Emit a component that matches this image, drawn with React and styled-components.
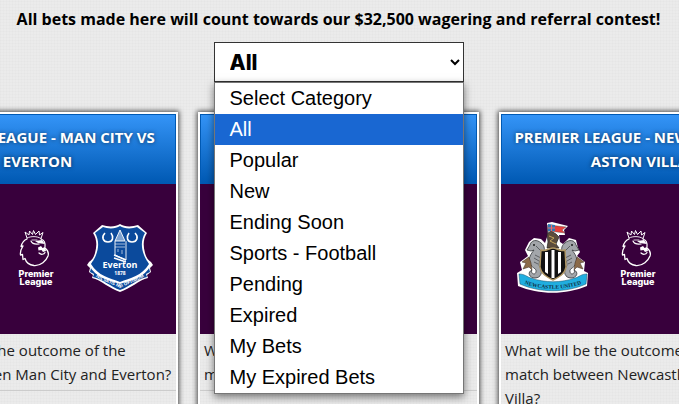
import React, { useState } from "react";
import styled, { createGlobalStyle, css } from "styled-components";

const categories = [
  "Select Category",
  "All",
  "Popular",
  "New",
  "Ending Soon",
  "Sports - Football",
  "Pending",
  "Expired",
  "My Bets",
  "My Expired Bets",
];

const LionLogo = () => (
  <LionIcon viewBox="0 0 48 60" aria-label="Premier League">
    <g fill="none" stroke="#ffffff" strokeLinecap="round" strokeLinejoin="round">
      <path
        strokeWidth="1"
        d="M14 10 L12 4 L16 7 L16.5 3 L19.5 6.5 L20.5 2.5 L22.5 6.5 L26 3 L26.5 7 L30 4.5 L28 10.5"
      />
      <path strokeWidth="0.9" d="M14 10 C18 8 24 8 28 10.5" />
      <path
        strokeWidth="1.3"
        d="M14 11 C11 12 9 15 8 18.5 L10 18 C8 21 7 24 7.5 27 L9.5 26.5 L10 31.5 L12 30.5 C13 34 16 37 21 37.5 C28 38 33 33 35 28 C36 25 34.5 22 32 20"
      />
      <path strokeWidth="1.2" d="M18 13 C19 15.5 22 16.5 26 16 M28 11 C31 12 32.5 15 32 19" />
      <path strokeWidth="0.8" d="M19 12 L24 12" />
      <path strokeWidth="1.2" d="M26 25 C28 27 31 26.5 32 24.5" />
    </g>
    <path fill="#ffffff" d="M22 13 L29 12 L32 16 L28 15.5 L25 15 Z" />
    <path fill="#ffffff" d="M25 19.5 L28 18 L29.5 20 L32 19 L33 23 L30 24 L28.5 22 L25.5 22.5 Z" />
    <text x="23" y="49">
      Premier
    </text>
    <text x="23" y="57">
      League
    </text>
  </LionIcon>
);

const EvertonCrest = () => (
  <Crest viewBox="3 0 72 72" aria-label="Everton">
    <path
      fill="#ffffff"
      d="M36 2 C32 5 24 5 18 3 L9 11 C13 17 13 24 11 31 C10 35 8 38 5 40 L3 43 L6 46 L5 50 L9 53 L8 56 C17 58 26 67 36 70 C46 67 55 58 64 56 L63 53 L67 50 L66 46 L69 43 L67 40 C64 38 62 35 61 31 C59 24 59 17 63 11 L54 3 C48 5 40 5 36 2 Z"
    />
    <path
      fill="#0b4a9c"
      d="M36 4 C32 7 24 7 19 5 L11 11 C15 18 15 25 12 33 C10 38 8 40 7 42 C14 54 26 56 36 60 C46 56 58 54 65 42 C64 40 62 38 60 33 C57 25 57 18 61 11 L53 5 C48 7 40 7 36 4 Z"
    />
    <path
      fill="#0b4a9c"
      d="M5 43 C12 56 24 58 36 62 C48 58 60 56 67 43 L65 46 L66 50 L62 52 L63 55 C53 57 45 65 36 68 C27 65 19 57 9 55 L10 52 L6 50 L7 46 Z"
    />
    <g fill="none" stroke="#ffffff" strokeWidth="1.6">
      <path d="M21 11 C17 15 19 20 24 20 C29 20 30 15 27 11" />
      <path d="M45 11 C42 15 43 20 48 20 C53 20 55 15 51 11" />
    </g>
    <g fill="none" stroke="#ffffff" strokeWidth="0.9">
      <path fill="#7fa3d1" d="M36 8 L31 19 L41 19 Z" />
      <path d="M31 19 V33 L42 38 V19" />
      <path d="M31 22 H41 M31 25 H41 M34 27 V30 M38 28 V32" strokeOpacity="0.7" />
      <path d="M30 33 L42 38 M30 36 L42 40" strokeWidth="1.4" />
    </g>
    <text x="36" y="46" fontSize="9">
      Everton
    </text>
    <text x="36" y="53" fontSize="5">
      1878
    </text>
    <path id="evertonMotto" fill="none" d="M6 49 C14 59 27 61 36 66 C45 61 58 59 66 49" />
    <text fontSize="4.4">
      <textPath href="#evertonMotto" startOffset="50%">
        NIL SATIS NISI OPTIMUM
      </textPath>
    </text>
  </Crest>
);

const Seahorse = () => (
  <g>
    <path
      fill="#a3a6aa"
      stroke="#33363a"
      strokeWidth="0.8"
      d="M24 21 C20 17 14 18 13 23 L10 28 L14 29 L17 28 C14 32 11 36 13 41 C14 46 20 46 19 50 C18 54 13 51 15 48 C10 50 12 56 18 56 C24 56 26 50 23 45 C20 41 25 37 27 31 C28 26 27 23 24 21 Z"
    />
    <path fill="none" stroke="#4a4d51" strokeWidth="0.8" d="M18 33 L24 36 M17 36 L22 39 M17 40 L21 42 M19 24 L24 29" />
    <path fill="#8b6a49" stroke="#3a2b20" strokeWidth="0.5" d="M12 35 L5 40 L9 41 L6 47 L12 45 L15 48 L14 41 Z" />
    <circle cx="17" cy="23" r="1" fill="#1c1c1c" />
  </g>
);

const NewcastleCrest = () => (
  <Crest viewBox="0 0 72 72" aria-label="Newcastle United">
    <path
      fill="#ffffff"
      d="M30 1 L35 0 L51 4 L47 8 L48 13 L42 13 L43 20 L46 22 L52 16 L59 18 L61 26 L63 30 L60 34 L68 40 L67 49 L71 51 L70 64 C49 73 22 73 1 64 L0 51 L5 48 L3 40 L11 34 L8 28 L12 20 L17 16 L24 17 L28 21 L31 12 Z"
    />
    <Seahorse />
    <g transform="translate(72 0) scale(-1 1)">
      <Seahorse />
    </g>
    <path fill="#5b4c3c" stroke="#222222" strokeWidth="0.7" d="M31 20 L30 12 L34 9 L39 12 L42 15 L39 22 L42 26 L30 26 Z" />
    <path fill="none" stroke="#c4a55b" strokeWidth="1" d="M32 14 L37 16 L33 19 L39 22" />
    <path stroke="#444444" strokeWidth="1" d="M31 3 V12" />
    <path fill="#e4403d" stroke="#444444" strokeWidth="0.4" d="M32 3 L49 5 L45 8 L48 11 L32 9 Z" />
    <path fill="#2f78b5" d="M31 2 L38 3 L38 9 L31 9 Z" />
    <path stroke="#ef6a66" strokeWidth="1.1" d="M31 6 L38 6 M34.5 3 V9" />
    <path
      fill="#111111"
      stroke="#b09763"
      strokeWidth="1.4"
      d="M24 28 C29 30 32 26 36 26 C40 26 43 30 48 28 L49 45 C48 52 42 55 36 58 C30 55 24 52 23 45 Z"
    />
    <path fill="#ffffff" d="M28 30 H31 V52 L28 50 Z M34.5 28 H37.5 V56 H34.5 Z M41 30 H44 V50 L41 52 Z" />
    <path
      fill="#20aee0"
      stroke="#134d66"
      strokeWidth="0.5"
      d="M2 52 C8 52 10 55 14 56 C28 61 44 61 58 56 C62 55 64 52 70 52 L69 62 C49 71 23 71 3 62 Z"
    />
    <path id="newcastleName" fill="none" d="M3 60 C23 69 49 69 69 60" />
    <CrestName fontSize="5.5">
      <textPath href="#newcastleName" startOffset="50%">
        NEWCASTLE UNITED
      </textPath>
    </CrestName>
  </Crest>
);

const PlainCrest = ({ color }) => (
  <Crest viewBox="0 0 72 72" aria-hidden="true">
    <circle cx="36" cy="36" r="32" fill="#ffffff" />
    <circle cx="36" cy="36" r="29" fill={color} />
  </Crest>
);

const bets = [
  {
    title: "Premier League - Man City vs Everton",
    question: "What will be the outcome of the match between Man City and Everton?",
    home: <PlainCrest color="#6caddf" />,
    away: <EvertonCrest />,
  },
  {
    title: "Premier League - Arsenal vs Spurs",
    question: "What will be the outcome of the match between Arsenal and Spurs?",
    home: <PlainCrest color="#db0007" />,
    away: <PlainCrest color="#132257" />,
  },
  {
    title: "Premier League - Newcastle vs Aston Villa",
    question:
      "What will be the outcome of the match between Newcastle and Aston Villa?",
    home: <NewcastleCrest />,
    away: <PlainCrest color="#670e36" />,
  },
];

export default function App() {
  const [category, setCategory] = useState("All");

  return (
    <Page>
      <GlobalStyle />
      <Notice>
        All bets made here will count towards our $32,500 wagering and referral
        contest!
      </Notice>
      <CategoryPicker>
        <CategorySelect
          aria-label="Category"
          value={category}
          onChange={(e) => setCategory(e.target.value)}
        >
          {categories.map((name) => (
            <option key={name}>{name}</option>
          ))}
        </CategorySelect>
        <CategoryMenu role="listbox" aria-label="Categories">
          {categories.map((name) => (
            <CategoryOption
              key={name}
              role="option"
              aria-selected={name === category}
              $selected={name === category}
              onClick={() => setCategory(name)}
            >
              {name}
            </CategoryOption>
          ))}
        </CategoryMenu>
      </CategoryPicker>
      <BetList>
        {bets.map((bet) => (
          <BetCard key={bet.title}>
            <BetTitle>{bet.title}</BetTitle>
            <BetBanner>
              {bet.home}
              <LionLogo />
              {bet.away}
            </BetBanner>
            <BetQuestion>{bet.question}</BetQuestion>
            <BetFooter />
          </BetCard>
        ))}
      </BetList>
    </Page>
  );
}

const texture = css`
  background-color: #ebebeb;
  background-image:
    repeating-linear-gradient(0deg, rgba(0, 0, 0, 0.01) 0 1px, transparent 1px 3px),
    repeating-linear-gradient(90deg, rgba(0, 0, 0, 0.01) 0 1px, transparent 1px 3px);
`;
const GlobalStyle = createGlobalStyle`
  * {
    box-sizing: border-box;
  }
  body {
    margin: 0;
    font-family: "Open Sans", sans-serif;
  }
`;
const Page = styled.main`
  display: flex;
  flex-direction: column;
  align-items: center;
  height: 100vh;
  padding: 7px 2px 0 0;
  border-bottom: 2px solid #ffffff;
  overflow: hidden;
  ${texture}
`;
const Notice = styled.p`
  margin: 0;
  color: #000000;
  font-size: 16px;
  font-weight: 700;
  line-height: 24px;
  text-align: center;
`;
const CategoryPicker = styled.div`
  position: relative;
  flex-shrink: 0;
  width: 250px;
  margin: 11px 0 30px;
`;
const CategorySelect = styled.select`
  display: block;
  width: 100%;
  height: 40px;
  padding: 0 0 0 11px;
  border: 1px solid #333333;
  border-radius: 0;
  background-color: #ffffff;
  color: #000000;
  font-family: Inter, sans-serif;
  font-size: 21px;
  font-weight: 800;
`;
const CategoryMenu = styled.ul`
  position: absolute;
  z-index: 1;
  top: 100%;
  left: 0;
  width: 100%;
  margin: 0;
  padding: 0;
  border: 1px solid #767676;
  background-color: #ffffff;
  box-shadow: 0 3px 8px rgba(0, 0, 0, 0.5);
  list-style: none;
`;
const CategoryOption = styled.li`
  padding: 0 15px;
  background-color: ${({ $selected }) => ($selected ? "#1967d2" : "#ffffff")};
  color: ${({ $selected }) => ($selected ? "#ffffff" : "#000000")};
  font-family: "Liberation Sans", sans-serif;
  font-size: 20px;
  line-height: 31px;
  cursor: default;
`;
const BetList = styled.section`
  display: flex;
  flex-shrink: 0;
  gap: 20px;
`;
const BetCard = styled.article`
  width: 281px;
  border: 2px solid #ffffff;
  box-shadow: 0 0 5px 1px rgba(0, 0, 0, 0.7);
  ${texture}
`;
const BetTitle = styled.h2`
  margin: 0;
  padding: 10px;
  border: 1px solid #0059b3;
  background: linear-gradient(#3494f7, #0059b3);
  color: #ffffff;
  font-size: 15px;
  font-weight: 700;
  line-height: 24px;
  text-align: center;
  text-shadow: 0 0 4px rgba(0, 0, 0, 0.6);
  text-transform: uppercase;
`;
const BetBanner = styled.div`
  display: flex;
  justify-content: center;
  align-items: center;
  gap: 26px;
  height: 150px;
  padding: 0 2px 2px 0;
  background-color: #38003c;
`;
const BetQuestion = styled.p`
  margin: 0;
  padding: 4px;
  color: #222222;
  font-size: 15px;
  line-height: 24px;
`;
const BetFooter = styled.div`
  height: 60px;
  border-top: 1px solid #cccccc;
`;
const Crest = styled.svg`
  flex-shrink: 0;
  width: 72px;
  height: 72px;
  text {
    fill: #ffffff;
    font-family: "Open Sans", sans-serif;
    font-weight: 700;
    text-anchor: middle;
  }
`;
const CrestName = styled.text`
  && {
    fill: #12303f;
    font-family: "Liberation Serif", serif;
  }
`;
const LionIcon = styled.svg`
  flex-shrink: 0;
  width: 48px;
  height: 60px;
  text {
    fill: #ffffff;
    font-family: Inter, sans-serif;
    font-size: 9px;
    font-weight: 800;
    text-anchor: middle;
  }
`;
